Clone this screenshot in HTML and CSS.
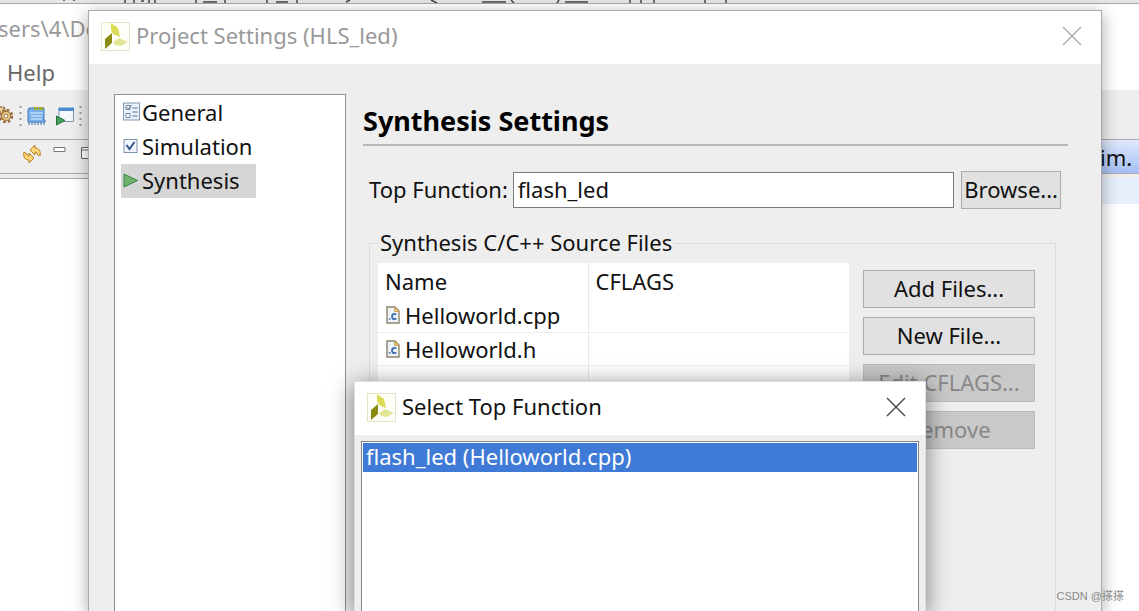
FILE: index.html
```html
<!DOCTYPE html>
<html lang="en">
<head>
<meta charset="utf-8">
<title>Project Settings (HLS_led)</title>
<link rel="stylesheet" href="styles.css">
</head>
<body>
<svg class="defs" aria-hidden="true">
  <symbol id="logo" viewBox="0 0 29 29">
    <rect x=".5" y=".5" width="28" height="28" fill="#fffffa" stroke="#e3e5c4"/>
    <path d="M10 1 17 6 19 15 12 12 10 8Z" fill="#d9dc54"/>
    <path d="M11 11V21L4 27V17Z" fill="#898c10"/>
    <path d="M12 20 18 16 27 20 20 24 14 23Z" fill="#e2e594"/>
  </symbol>
  <symbol id="close" viewBox="0 0 20 20"><path d="M1 1 19 19M19 1 1 19" fill="none" stroke="currentColor" stroke-width="1.4"/></symbol>
  <symbol id="cfile" viewBox="0 0 14 18">
    <path d="M1 1H9L13 5V17H1Z" fill="#eef3fb" stroke="#8d8468" stroke-width="1.4"/>
    <path d="M8.500 1V5.500H13Z" fill="#e8c77a" stroke="#c49a4c" stroke-width=".8"/>
    <path d="M10.300 8.700Q9.500 7.900 8.300 7.900C5.300 7.900 5.300 13.200 8.300 13.200Q9.500 13.200 10.300 12.400" fill="none" stroke="#3c6cab" stroke-width="1.800"/>
    <path d="M2.800 12.300h1.600v1.500H2.800Z" fill="#3c6cab"/>
  </symbol>
</svg>

<main class="ide">
  <svg class="strip" viewBox="0 0 1139 3" preserveAspectRatio="xMinYMin slice" aria-hidden="true">
    <path d="M64 0v1M74 0v1M125 0v3M134 0v3M141 1h3M149 0v3M155 0v3M196 0v3M203 2h14M225 0v3M267 0v3M276 2h12M297 0v3M346 2l4-2M431 0l6 3M482 2h24M511 0l3 3M559 0l-2 3M565 2h23M630 0v3M641 0v3M654 0v3M705 0v3M726 0v3" fill="none" stroke="#444" stroke-width="1.500"/>
  </svg>
  <div class="path">sers\4\De</div>
  <nav class="menubar"><button type="button">Help</button></nav>
  <div class="toolbar">
    <svg width="86" height="26" viewBox="0 0 86 26" aria-hidden="true">
      <g fill="none" stroke="#9a6f3c">
        <circle cx="2" cy="8" r="3" fill="#f3dfb0" stroke-width="2" stroke-dasharray="2 1"/>
        <circle cx="6" cy="14" r="6" stroke-width="2.500" stroke-dasharray="2.700 2"/>
        <circle cx="6" cy="14" r="4.500" fill="#f1d28d" stroke-width="1.200"/>
        <circle cx="6" cy="14" r="2" fill="#fff"/>
      </g>
      <path d="M20.500 4v20M80.500 4v20" stroke="#a39c8d" stroke-width="2" stroke-dasharray="2 4"/>
      <path d="M29 6H44V18H45V20H28V8Z" fill="#78aee9" stroke="#447bb7"/>
      <path d="M30 11H43M31 14H42M31 17H42" stroke="#e1f0ff"/>
      <path d="M29 20v3M32 20v3M35 20v3M38 20v3M41 20v3M44 20v3" stroke="#3a70aa"/>
      <path d="M34 6.500h4M39 6.500h4" stroke="#a2ad27" stroke-width="3"/>
      <path d="M59 6.500H73.500V19.500H59Z" fill="#f5f9fe" stroke="#8297ab"/>
      <path d="M58.500 5.500H74V9H58.500Z" fill="#4c8bd0"/>
      <path d="M56.500 14 65 18.500 56.500 23Z" fill="#3fa35e" stroke="#28703e"/>
    </svg>
  </div>
  <div class="tabs">
    <svg class="viewicons" width="92" height="26" viewBox="0 0 92 26" aria-hidden="true">
      <path d="M30 6 35 1V4C39 4 41 7 40 12L37 10C37 8 36 8 35 8V11Z" fill="#ffd979" stroke="#b37c1c"/>
      <path d="M34 14 29 19V16C25 16 23 13 24 8L27 10C27 12 28 12 29 12V9Z" fill="#ffd979" stroke="#b37c1c"/>
      <path d="M54 3.500H65V7.500H54Z" fill="#fff" stroke="#777"/>
      <path d="M81.500 3.500H92V14.500H81.500ZM81.500 6H92" fill="#fff" stroke="#666"/>
    </svg>
    <div class="outline">im.</div>
  </div>
  <div class="editor"><div class="current"></div></div>
</main>

<section class="window settings" aria-label="Project Settings">
  <header class="titlebar">
    <svg class="logo"><use href="#logo"/></svg>
    <h1>Project Settings (HLS_led)</h1>
    <button class="close" type="button" aria-label="Close settings"><svg><use href="#close"/></svg></button>
  </header>
  <div class="body">
    <nav class="categories">
      <button type="button">
        <svg viewBox="0 0 20 20"><rect x="2" y="1" width="16" height="17" fill="#e8f2fb" stroke="#8397b1"/><path d="M4.500 3.500h4v4h-4ZM4.500 11.500h4v4h-4Z" fill="#fff" stroke="#73869f"/><path d="M5 5l2 2 3-4M11 6h5M11 10h5M11 14h5" fill="none" stroke="#5b7190"/></svg>General</button>
      <button type="button">
        <svg viewBox="0 0 20 20"><rect x="2.500" y="3.500" width="13" height="13" fill="#f0f5fc" stroke="#8195b1"/><path d="M5 9 8 13 13 6" fill="none" stroke="#35578c" stroke-width="2"/></svg>Simulation</button>
      <button type="button" class="selected">
        <svg viewBox="0 0 20 20"><path d="M2.500 4 16 10.500 2.500 17Z" fill="#6db36e" stroke="#388447"/></svg>Synthesis</button>
    </nav>
    <div class="panel">
      <h2>Synthesis Settings</h2>
      <div class="toprow">
        <label for="top">Top Function:</label>
        <input id="top" type="text" value="flash_led">
        <button class="btn" type="button">Browse...</button>
      </div>
      <fieldset>
        <legend>Synthesis C/C++ Source Files</legend>
        <div class="sources">
          <table>
            <thead><tr><th>Name</th><th>CFLAGS</th></tr></thead>
            <tbody>
              <tr><td><span><svg><use href="#cfile"/></svg>Helloworld.cpp</span></td><td></td></tr>
              <tr><td><span><svg><use href="#cfile"/></svg>Helloworld.h</span></td><td></td></tr>
              <tr><td></td><td></td></tr>
            </tbody>
          </table>
          <div class="actions">
            <button class="btn" type="button">Add Files...</button>
            <button class="btn" type="button">New File...</button>
            <button class="btn" type="button" disabled>Edit CFLAGS...</button>
            <button class="btn" type="button" disabled>Remove</button>
          </div>
        </div>
      </fieldset>
    </div>
  </div>
</section>

<section class="window chooser" aria-label="Select Top Function">
  <header class="titlebar">
    <svg class="logo"><use href="#logo"/></svg>
    <h1>Select Top Function</h1>
    <button class="close" type="button" aria-label="Close chooser"><svg><use href="#close"/></svg></button>
  </header>
  <div class="choices"><button type="button">flash_led (Helloworld.cpp)</button></div>
</section>
<div class="watermark">CSDN @搽搽</div>
</body>
</html>
```

FILE: styles.css
```css
* { box-sizing: border-box; }
body {
  margin: 0;
  height: 100vh;
  overflow: hidden;
  position: relative;
  background: #fff;
  color: #111;
  font: 22px/32px "Noto Sans", "Open Sans", sans-serif;
}
button, input { font: inherit; color: inherit; }
h1, h2 { margin: 0; font-weight: 400; font-size: inherit; }
svg { display: block; flex: none; }
.defs { position: absolute; width: 0; height: 0; }

.ide { display: flex; flex-direction: column; height: 100%; white-space: nowrap; }
.strip { width: 100%; height: 4px; background: #e3e5e9; border-bottom: 1px solid #a8a8a8; }
.path { height: 52px; line-height: 48px; margin-left: -2px; color: #999; }
.menubar { height: 34px; }
.menubar button { border: 0; background: none; padding: 0 7px; color: #666; line-height: 32px; }
.toolbar { height: 50px; padding-top: 12px; background: #eee; border-bottom: 1px solid #aaa; }
.tabs {
  display: flex;
  justify-content: space-between;
  height: 34px;
  background: #eee;
  border-bottom: 1px solid #aaa;
}
.viewicons { margin-top: 4px; }
.outline { width: 47px; padding-left: 8px; line-height: 34px; background: linear-gradient(#dfe8fc, #a5bff4); }
.editor { flex: 1; border-top: 4px solid #eee; box-shadow: inset 0 1px #aaa; }
.current { height: 26px; width: 47px; margin-left: auto; background: #e7effd; }

.window { position: absolute; bottom: 0; display: flex; flex-direction: column; background: #eee; }
.settings {
  left: 88px;
  right: 37px;
  top: 10px;
  border: 1px solid #aaa;
  border-bottom: 0;
  box-shadow: 0 4px 16px rgba(0, 0, 0, .35);
}
.chooser {
  left: 354px;
  right: 213px;
  top: 381px;
  border: 1px solid #ddd;
  border-bottom: 0;
  box-shadow: 0 4px 22px rgba(0, 0, 0, .5);
}
.titlebar { display: flex; align-items: center; height: 53px; flex: none; padding: 0 19px 3px 12px; background: #fff; }
.settings .titlebar { color: #999; }
.logo { width: 29px; height: 29px; margin-right: 6px; }
.titlebar h1 { flex: 1; line-height: 30px; padding-bottom: 2px; }
.close { border: 0; padding: 0; background: none; color: #444; }
.settings .close { color: #aaa; }
.close svg { width: 20px; height: 20px; }

.body { flex: 1; min-height: 0; display: flex; gap: 17px; padding: 30px 33px 0 25px; }
.categories { width: 232px; padding: 1px 6px; background: #fff; border: 1px solid #8e9099; border-bottom: 0; }
.categories button {
  display: flex;
  align-items: center;
  height: 34px;
  padding: 0 16px 2px 0;
  border: 0;
  background: none;
}
.categories svg { width: 21px; height: 20px; }
.categories .selected { background: #d6d6d6; }

.panel { flex: 1; display: flex; flex-direction: column; }
.panel h2 {
  height: 52px;
  line-height: 54px;
  font-size: 27px;
  font-weight: 700;
  color: #000;
  border-bottom: 2px solid #b6b6b6;
}
.toprow { display: flex; align-items: center; gap: 7px; margin: 25px 7px 0 6px; }
.toprow label { margin-right: -2px; padding-bottom: 2px; }
.toprow input { flex: 1; min-width: 0; height: 36px; padding: 0 4px 3px; background: #fff; border: 1px solid #7a7a7a; }
.btn { height: 38px; padding: 0 2px 3px; background: #e1e1e1; border: 1px solid #adadad; line-height: 32px; }
.btn:disabled { background: #c9c9c9; color: #888; border-color: #bbb; }
fieldset { flex: 1; min-height: 0; margin: 18px 12px 0 6px; padding: 4px 20px 0 8px; border: 1px solid #dcdcdc; border-bottom: 0; }
legend { padding: 0 2px 2px; line-height: 30px; }
.sources { display: flex; align-items: flex-start; gap: 14px; }
table { flex: 1; border-collapse: collapse; table-layout: fixed; background: #fff; }
th, td { height: 33px; padding: 0; border-bottom: 1px solid #eee; }
th { height: 36px; border-bottom: 0; padding: 0 7px; text-align: left; font-weight: 400; }
th:first-child, td:first-child { width: 210px; border-right: 1px solid #e6e9f2; }
td span { display: flex; align-items: center; gap: 5px; padding-left: 8px; line-height: 30px; }
td svg { width: 14px; height: 18px; }
.actions { display: flex; flex-direction: column; gap: 9px; width: 172px; padding-top: 7px; }

.choices { flex: 1; margin: 6px 6px 0; padding: 1px; background: #fff; border: 1px solid #82858d; border-bottom: 0; }
.choices button {
  display: block;
  width: 100%;
  height: 29px;
  padding: 0 3px 2px;
  border: 0;
  background: #3e7ad6;
  color: #fff;
  line-height: 27px;
  text-align: left;
}
.watermark {
  position: absolute;
  right: 15px;
  bottom: 6px;
  font: 11px/18px "Liberation Sans", "Noto Sans CJK SC", sans-serif;
  color: #888;
}
```
